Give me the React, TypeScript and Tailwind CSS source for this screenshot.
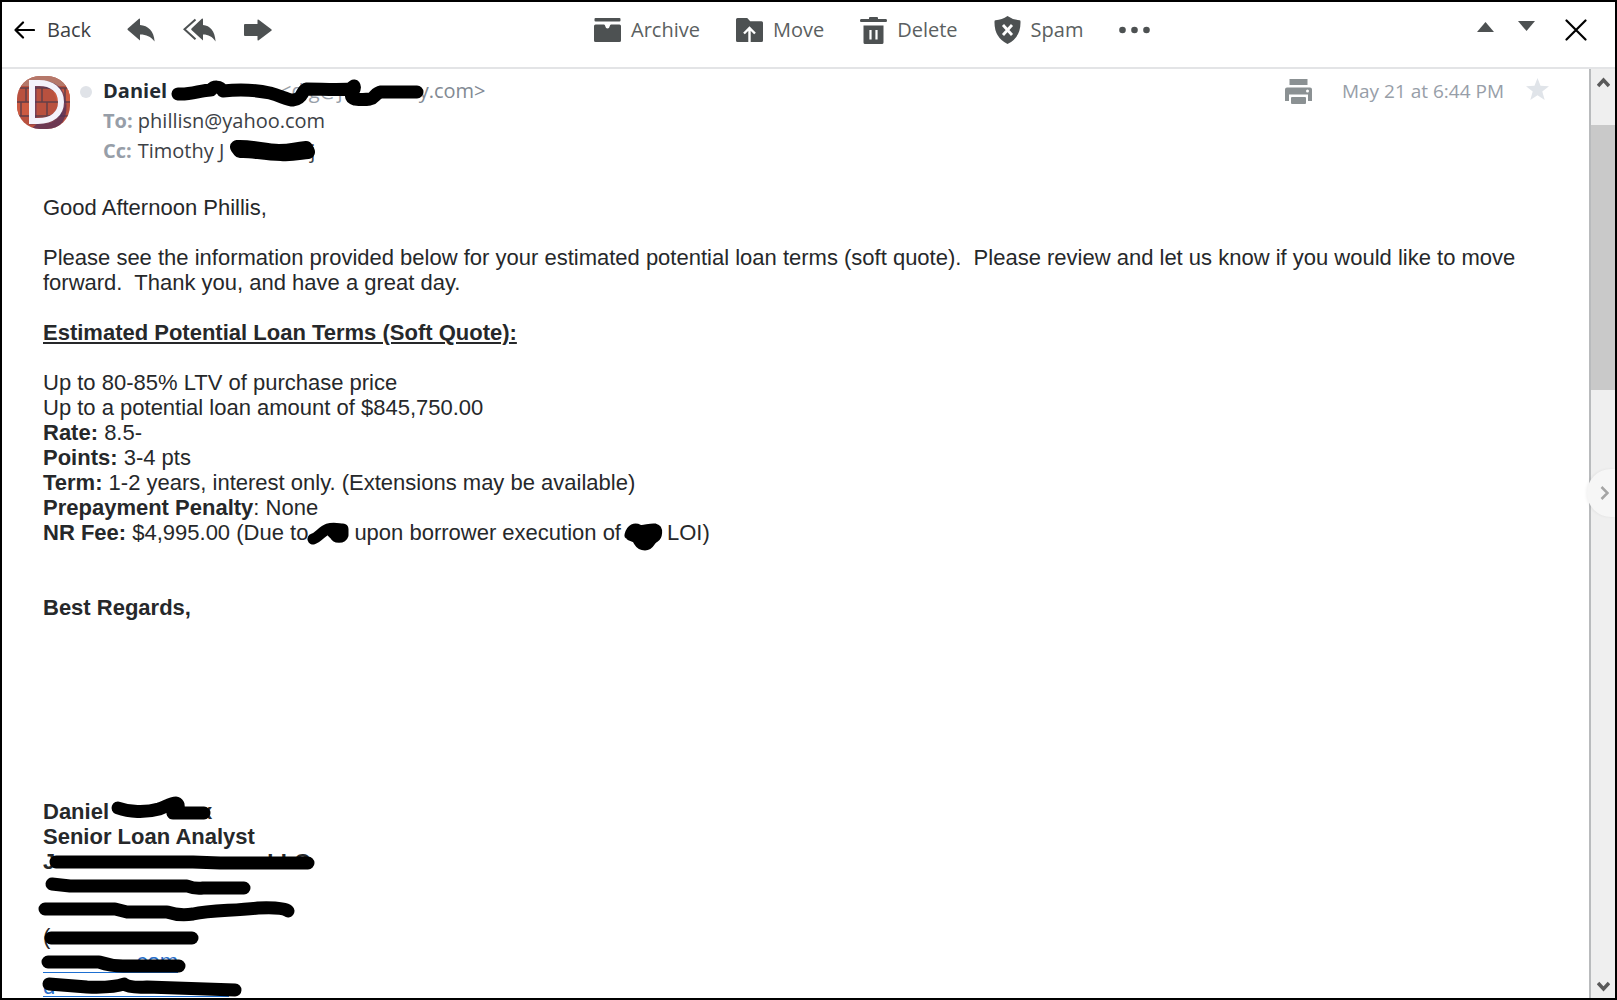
import type { ReactNode } from 'react';

/* A black marker stroke laid over a line of text. */
function Ink({ d, w = 13 }: { d: string; w?: number }) {
  return (
    <svg className="pointer-events-none absolute top-0 left-0 overflow-visible" width="1" height="1" aria-hidden="true">
      <path d={d} fill="none" stroke="#000" strokeWidth={w} strokeLinecap="round" strokeLinejoin="round" />
    </svg>
  );
}

function Line({ children, className = '' }: { children?: ReactNode; className?: string }) {
  return <div className={`relative min-h-[25px] whitespace-pre-wrap ${className}`}>{children}</div>;
}

function ReplyIcon() {
  return (
    <svg width="28" height="25" viewBox="0 0 28 25" fill="#4d5152" aria-hidden="true">
      <path d="M13 1.500V7c8 .5 14 6 14.600 16.500-4.100-5-8-7-14.600-7v6L.8 12Q0 11.300.8 10.600L12 .8Q13 0 13 1.500z" />
    </svg>
  );
}

function ReplyAllIcon() {
  return (
    <svg width="33" height="25" viewBox="0 0 33 25" fill="#4d5152" aria-hidden="true">
      <path d="M20 1.500V7c7 .5 12 6 12.600 16.500-3.600-5-7-7-12.600-7v6L8.500 12Q7.800 11.300 8.500 10.600L18.800.8Q20 0 20 1.500z" />
      <path d="M12.500 1.500 1.500 11.300l11 10" fill="none" stroke="#4d5152" strokeWidth="2" />
    </svg>
  );
}

function ForwardIcon() {
  return (
    <svg width="28" height="22" viewBox="0 0 28 22" fill="#4d5152" aria-hidden="true">
      <path d="M1 5h12.500V1.200q0-1.200 1.200-.4l12.600 9.400q.9.800 0 1.600l-12.600 9.400q-1.200.8-1.200-.4V17H1q-1 0-1-1V6q0-1 1-1z" />
    </svg>
  );
}

function ArchiveIcon() {
  return (
    <svg width="27" height="24" viewBox="0 0 27 24" fill="#4d5152" aria-hidden="true">
      <rect x="0.500" y="0" width="26" height="3.500" rx="1" />
      <path d="M1.500 6.500H10q1 0 1.200 1.500.5 2.500 2.300 2.500t2.300-2.500q.2-1.500 1.200-1.500h8.500q1.500 0 1.500 1.500v14.500q0 1.500-1.500 1.500h-24Q0 24 0 22.500V8q0-1.500 1.500-1.500z" />
    </svg>
  );
}

function MoveIcon() {
  return (
    <svg width="27" height="24" viewBox="0 0 27 24" aria-hidden="true">
      <path d="M1.500 0h9.700l3 3.200h11.300q1.500 0 1.500 1.500v17.800q0 1.500-1.500 1.500h-24Q0 24 0 22.500v-21Q0 0 1.500 0z" fill="#4d5152" />
      <path d="M13.500 24V10M8 15.500l5.500-5.500 5.500 5.500" fill="none" stroke="#fff" strokeWidth="2.400" />
    </svg>
  );
}

function TrashIcon() {
  return (
    <svg width="27" height="27" viewBox="0 0 27 27" aria-hidden="true">
      <path d="M1 2h8V1q0-1 1-1h7q1 0 1 1v1h8q1 0 1 1.500T26 5H1Q0 5 0 3.500T1 2zM3.500 8.500h20v17q0 1.500-1.500 1.500H5q-1.500 0-1.500-1.500z" fill="#4d5152" />
      <path d="M10.500 13v9.500M16.500 13v9.500" stroke="#fff" strokeWidth="2.200" />
    </svg>
  );
}

function SpamIcon() {
  return (
    <svg width="27" height="28" viewBox="0 0 27 28" aria-hidden="true">
      <path d="M13.500 0q5.500 4 12 4.200 1 0 1 1.200.5 16-13 22.600Q0 21.400.5 5.400q0-1.200 1-1.200Q8 4 13.500 0z" fill="#4d5152" />
      <path d="m9 9 9 10M18 9 9 19" stroke="#fff" strokeWidth="2.800" />
    </svg>
  );
}

function PrintIcon() {
  return (
    <svg width="27" height="25" viewBox="0 0 27 25" fill="#8b9193" aria-hidden="true">
      <path d="M4.500 0h18v6h-18zM2 8.500h23q2 0 2 2V22h-4v-6.500H4V22H0V10.500q0-2 2-2z" />
      <rect x="6" y="18" width="15" height="7" rx="1" />
      <circle cx="22.500" cy="12" r="1.500" fill="#fff" />
    </svg>
  );
}

function Avatar() {
  return (
    <svg width="53" height="53" viewBox="0 0 53 53" className="shrink-0" role="img" aria-label="Daniel">
      <defs>
        <clipPath id="avatarClip">
          <rect width="53" height="53" rx="23" />
        </clipPath>
      </defs>
      <g clipPath="url(#avatarClip)">
        <rect width="53" height="53" fill="#b9513f" />
        <path d="M0 0h53v10H0z" fill="#b5786a" />
        <path d="M0 27h12v12H0zM36 14h17v11H40z" fill="#cc5b42" />
        <path d="M0 12h53M0 26h53M0 40h53M9 12v14M4 26v14M30 26v14M25 12v14M48 12v14M44 26v14" stroke="#643f48" strokeWidth="1.500" />
        <path d="M20 48Q46 50 49 24q3 22-12 29H14z" fill="#54305a" opacity=".75" />
        <path d="M16 8v37h6c14 0 23-7 23-19S36 8 23 8z" fill="none" stroke="#4d3765" strokeWidth="7" opacity=".6" />
        <path d="M15 7v38h6c14 0 23-7 23-19S35 7 22 7z" fill="none" stroke="#f4f3fb" strokeWidth="6" />
      </g>
    </svg>
  );
}

function Action({ icon, label }: { icon: ReactNode; label: string }) {
  return (
    <button type="button" className="flex items-center gap-2.5 text-[#5b5f61]">
      {icon}
      <span>{label}</span>
    </button>
  );
}

function Toolbar() {
  return (
    <header className="flex h-[67px] shrink-0 items-start border-b-2 border-[#e3e4e6] pr-7 pl-3 text-[20px] leading-7">
      <div className="flex h-14 w-[580px] items-center">
        <button type="button" className="flex items-center gap-3 text-[#3c4043]">
          <svg width="21" height="18" viewBox="0 0 21 18" fill="none" stroke="#000" strokeWidth="2.200" strokeLinecap="round" strokeLinejoin="round" aria-hidden="true">
            <path d="M20 9H1.500M9 1.500 1.500 9 9 16.500" />
          </svg>
          <span>Back</span>
        </button>
        <button type="button" aria-label="Reply" className="ml-9"><ReplyIcon /></button>
        <button type="button" aria-label="Reply all" className="ml-7"><ReplyAllIcon /></button>
        <button type="button" aria-label="Forward" className="ml-7"><ForwardIcon /></button>
      </div>
      <div className="flex h-14 items-center gap-9">
        <Action icon={<ArchiveIcon />} label="Archive" />
        <Action icon={<MoveIcon />} label="Move" />
        <Action icon={<TrashIcon />} label="Delete" />
        <Action icon={<SpamIcon />} label="Spam" />
        <button type="button" aria-label="More">
          <svg width="31" height="8" viewBox="0 0 31 8" fill="#4d5152" aria-hidden="true">
            <circle cx="3.500" cy="4" r="3.300" />
            <circle cx="15.500" cy="4" r="3.300" />
            <circle cx="27.500" cy="4" r="3.300" />
          </svg>
        </button>
      </div>
      <div className="ml-auto flex h-14 items-center">
        <button type="button" aria-label="Previous message" className="pb-1.5">
          <svg width="17" height="10" viewBox="0 0 17 10" fill="#4d5152" aria-hidden="true"><path d="M8.500 0 17 10H0z" /></svg>
        </button>
        <button type="button" aria-label="Next message" className="ml-6 pb-2">
          <svg width="17" height="10" viewBox="0 0 17 10" fill="#4d5152" aria-hidden="true"><path d="M0 0h17L8.500 10z" /></svg>
        </button>
        <button type="button" aria-label="Close" className="ml-[30px]">
          <svg width="22" height="22" viewBox="0 0 22 22" fill="none" stroke="#000" strokeWidth="2.200" strokeLinecap="round" aria-hidden="true">
            <path d="m1.500 1.500 19 19M20.500 1.500l-19 19" />
          </svg>
        </button>
      </div>
    </header>
  );
}

function MessageHeader() {
  return (
    <div className="flex items-start pt-[7px] pr-10 pl-[15px] text-[20px] leading-[30px] text-[#3c4146]">
      <Avatar />
      <span className="mt-2.5 ml-2.5 size-3 shrink-0 rounded-full bg-[#e0e3e8]" />
      <div className="ml-[11px]">
        <div className="relative flex">
          <span className="font-bold text-[#232a31]">Daniel</span>
          <span className="ml-[113px] text-[#979ea8]">&lt;dig@j</span>
          <span className="ml-[76px] text-[#828a93]">y.com&gt;</span>
          <Ink d="M75 18C88 19 98 14 108 14C111 10 117 10 120 15C140 13 153 14 167 17C178 20 185 24 190 24C201 23 198 14 204 13C218 13 235 14 247 13L251 10C254 14 243 20 252 23Q260 24 267 23C272 22 272 17 278 16H314" />
        </div>
        <div>
          <b className="font-bold text-[#979ea8]">To:</b> phillisn@yahoo.com
        </div>
        <div className="relative flex">
          <b className="font-bold text-[#979ea8]">Cc:</b>
          <span className="ml-1.5">Timothy J</span>
          <span className="ml-[86px]">j</span>
          <Ink w={14} d="M134 11C148 10 162 15 176 15S190 13 203 12L205 16C196 17 188 19 178 18C160 18 148 14 137 15z" />
        </div>
      </div>
      <div className="ml-auto flex items-center">
        <button type="button" aria-label="Print"><PrintIcon /></button>
        <time className="ml-[30px] text-[19px] text-[#979ea8]">May 21 at 6:44 PM</time>
        <button type="button" aria-label="Star message" className="ml-[22px] pb-1">
          <svg width="23" height="22" viewBox="0 0 23 22" fill="#e0e4e9" aria-hidden="true">
            <path d="m11.500 0 3 7.800 8.500.5-6.700 5.200L18.700 22l-7.200-4.800L4.300 22l2.400-8.500L0 8.300l8.500-.5z" />
          </svg>
        </button>
      </div>
    </div>
  );
}

function MessageBody() {
  return (
    <article className="pt-[29px] pr-16 pl-[41px] font-['Liberation_Sans',Arial,sans-serif] text-[22px] leading-[25px] text-[#26282a]">
      <Line>Good Afternoon Phillis,</Line>
      <Line />
      <Line>
        {'Please see the information provided below for your estimated potential loan terms (soft quote).\u00a0 Please review and let us know if you would like to move forward.\u00a0 Thank you, and have a great day.'}
      </Line>
      <Line />
      <Line><b className="underline">Estimated Potential Loan Terms (Soft Quote):</b></Line>
      <Line />
      <Line>Up to 80-85% LTV of purchase price</Line>
      <Line>Up to a potential loan amount of $845,750.00</Line>
      <Line><b>Rate:</b> 8.5-</Line>
      <Line><b>Points:</b> 3-4 pts</Line>
      <Line><b>Term:</b> 1-2 years, interest only. (Extensions may be available)</Line>
      <Line><b>Prepayment Penalty</b>: None</Line>
      <Line>
        <b>NR Fee:</b> $4,995.00 (Due to
        <span className="relative inline-block h-[25px] w-[46px] align-top">
          <Ink w={11} d="M5 19C11 17 14 11 20 9S31 9 35 9V15C34 18 28 18 27 15L24 12H33" />
        </span>
        upon borrower execution of
        <span className="relative inline-block h-[25px] w-[46px] align-top">
          <Ink w={9} d="M8 15C10 8 14 7 18 9S29 7 34 8C38 9 37 16 34 18C29 20 30 26 24 26C17 26 18 21 14 18L9 16L24 12L30 14L22 20z" />
        </span>
        LOI)
      </Line>
      <Line />
      <Line />
      <Line className="font-bold">Best Regards,</Line>

      <div className="pt-[179px]">
        <Line className="flex font-bold">
          Daniel
          <span className="ml-[91px]">x</span>
          <Ink d="M75 9C86 13 102 14 116 10C122 8 128 4 133 4C138 6 134 12 130 14H161" />
        </Line>
        <Line className="font-bold">Senior Loan Analyst</Line>
        <Line className="flex font-bold">
          J<span className="ml-[212px]">LLC</span>
          <Ink d="M13 13H150L177 14H265" />
        </Line>
        <Line><Ink d="M9 10L27 12H144Q152 15 160 14H201" /></Line>
        <Line><Ink d="M2 10H72L84 13H124Q136 17 150 15C168 11 190 12 215 9Q240 8 245 12" /></Line>
        <Line>(<Ink d="M8 14H149" /></Line>
        <Line>
          <a href="#site" className="inline-flex h-[24px] w-[135px] justify-end border-b border-[#1d6fd1] align-top leading-[25px] text-[#2a6fc9]">com</a>
          <Ink d="M5 13H56Q68 17 80 17H136" />
        </Line>
        <Line>
          <a href="#mail" className="inline-flex h-[23px] w-[186px] border-b border-[#1d6fd1] align-top leading-[25px] text-[#2a6fc9]">d</a>
          <Ink d="M6 10L44 13Q70 14 81 10Q86 14 104 13L192 16" />
        </Line>
      </div>
    </article>
  );
}

function ScrollRail() {
  return (
    <div className="relative flex w-[26px] shrink-0 flex-col border-l-2 border-[#b9bbbd] bg-[#efefef]">
      <button type="button" aria-label="Scroll up" className="flex h-14 items-start justify-center pt-2">
        <svg width="13" height="11" viewBox="0 0 13 11" fill="none" stroke="#5a5a5a" strokeWidth="3.500" aria-hidden="true"><path d="m1 9 5.500-6L12 9" /></svg>
      </button>
      <div className="h-[265px] bg-[#c9c9c9]" />
      <button type="button" aria-label="Scroll down" className="mt-auto flex justify-center pb-1.5">
        <svg width="13" height="11" viewBox="0 0 13 11" fill="none" stroke="#5a5a5a" strokeWidth="3.500" aria-hidden="true"><path d="m1 2 5.500 6L12 2" /></svg>
      </button>
      <button
        type="button"
        aria-label="Show side panel"
        className="absolute top-[400px] -left-1 flex h-12 w-7 items-center justify-end rounded-l-full bg-[#f6f6f6] pr-1.5 shadow-[-1px_0_3px_rgba(0,0,0,0.06)]"
      >
        <svg width="9" height="14" viewBox="0 0 9 14" fill="none" stroke="#a5a5a5" strokeWidth="2.500" aria-hidden="true"><path d="m1.500 1 6 6-6 6" /></svg>
      </button>
    </div>
  );
}

export default function App() {
  return (
    <div className="flex h-screen flex-col overflow-hidden border-2 border-black bg-white font-['Open_Sans','Noto_Sans',sans-serif]">
      <Toolbar />
      <div className="flex min-h-0 flex-1">
        <main className="min-w-0 flex-1 overflow-hidden">
          <MessageHeader />
          <MessageBody />
        </main>
        <ScrollRail />
      </div>
    </div>
  );
}
